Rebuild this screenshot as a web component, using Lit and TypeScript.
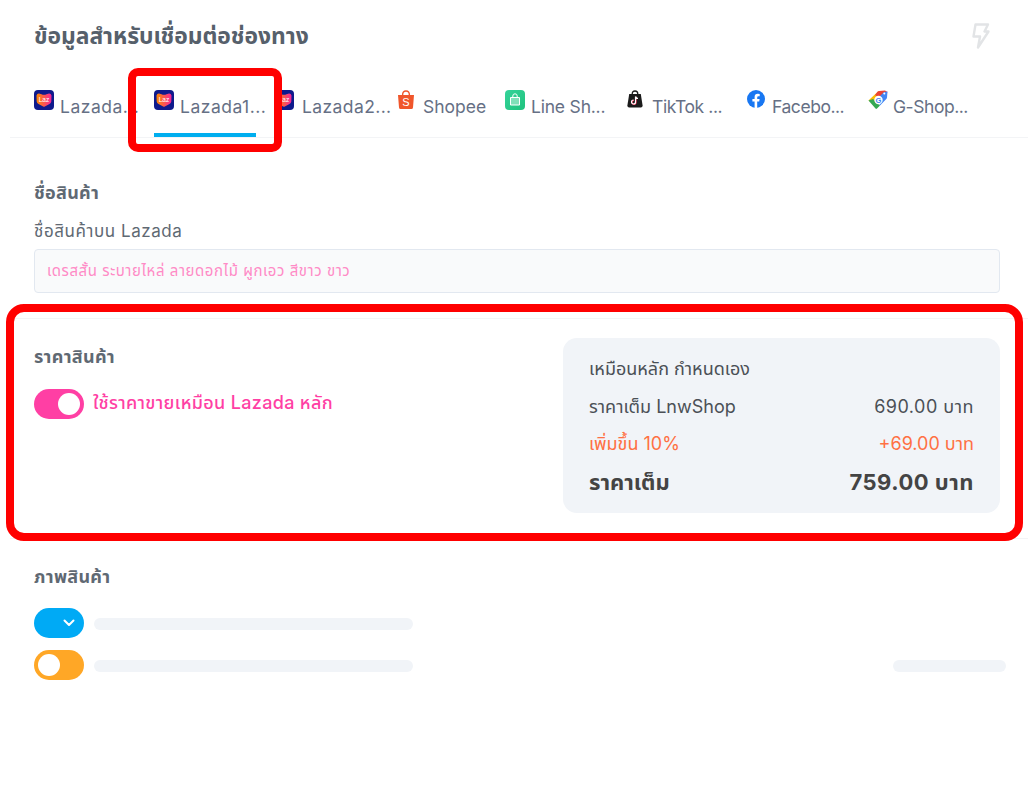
import { LitElement, html, css, svg } from "lit";
import { customElement } from "lit/decorators.js";

const laz = (id: string) => svg`<svg width="20" height="20" viewBox="0 0 20 20">
  <defs><linearGradient id="h${id}" x1="0" y1="0" x2="1" y2="0"><stop offset="0" stop-color="#ff8a00"/><stop offset="1" stop-color="#f5259b"/></linearGradient></defs>
  <rect width="20" height="20" rx="4" fill="#0f1a8c"/>
  <path d="M2.5 5.5 Q3 3.5 5 3.6 L7.5 4.2 Q10 5.4 12.5 4.2 L15 3.6 Q17 3.5 17.5 5.5 L17.3 11.5 Q17 13 15.5 14 L10.8 16.6 Q10 17 9.2 16.6 L4.5 14 Q3 13 2.7 11.5 Z" fill="url(#h${id})"/>
  <text x="10" y="11.6" text-anchor="middle" font-family="Liberation Sans" font-size="6.5" fill="#fff">Laz</text></svg>`;

const shopee = svg`<svg width="18" height="20" viewBox="0 0 18 20">
  <path d="M5.6 5 Q5.6 1 9 1 Q12.4 1 12.4 5" fill="none" stroke="#f0562b" stroke-width="1.4"/>
  <path d="M1 5 H17 L16 17.5 Q15.9 19 14.4 19 H3.6 Q2.1 19 2 17.5 Z" fill="#f0562b"/>
  <text x="9" y="15.8" text-anchor="middle" font-family="Liberation Sans" font-size="11" fill="#fff">S</text></svg>`;

const line = svg`<svg width="20" height="20" viewBox="0 0 20 20">
  <defs><linearGradient id="lg" x1="0" y1="0" x2="1" y2="1"><stop offset="0" stop-color="#35d39a"/><stop offset="1" stop-color="#1fc27d"/></linearGradient></defs>
  <rect width="20" height="20" rx="4" fill="url(#lg)"/>
  <path d="M5.5 7.5 H14.5 V15 H5.5 Z" fill="#c9f3e0" fill-opacity=".55" stroke="#fff" stroke-width="1"/>
  <path d="M7.8 7.5 V6 Q7.8 3.8 10 3.8 Q12.2 3.8 12.2 6 V7.5" fill="none" stroke="#fff" stroke-width="1"/></svg>`;

const tiktok = svg`<svg width="16" height="18" viewBox="0 0 16 18">
  <path d="M5.2 4 Q5.2 1 8 1 Q10.8 1 10.8 4" fill="none" stroke="#1b1b1b" stroke-width="1.3"/>
  <path d="M2.2 4 H13.8 L15.6 15.5 Q15.7 17.5 13.8 17.5 H2.2 Q.3 17.5 .4 15.5 Z" fill="#1b1b1b"/>
  <path d="M8.5 6.5 V12 A2 2 0 1 1 6.5 10" fill="none" stroke="#ff2d55" stroke-width="1.2" transform="translate(.5 .3)"/>
  <path d="M8.5 6.5 V12 A2 2 0 1 1 6.5 10 M8.5 6.5 Q9 8.3 11 8.5" fill="none" stroke="#fff" stroke-width="1.2"/></svg>`;

const fb = svg`<svg width="18" height="18" viewBox="0 0 18 18">
  <circle cx="9" cy="9" r="9" fill="#1877f2"/>
  <path d="M7.6 18 V11.6 H5.4 V9 H7.6 V7 Q7.6 3.8 10.8 3.8 Q12 3.8 12.7 4 V6.2 H11.5 Q10.2 6.2 10.2 7.5 V9 H12.6 L12.2 11.6 H10.2 V18 Z" fill="#fff"/></svg>`;

const gshop = svg`<svg width="20" height="20" viewBox="0 0 20 20">
  <path d="M.5 10.5 L10 1.5 H12 L5 13.5 Z" fill="#fbbc04"/>
  <path d="M.5 10.5 L7.5 18.6 Q8.3 19.3 9 18.6 L12 15.5 L5 9 Z" fill="#34a853"/>
  <path d="M9.5 1.8 Q10.2 1 11 1 L17 .5 L19.5 2 L13 9 L7 5 Z" fill="#ea4335"/>
  <path d="M19.5 1.5 L19 7.5 Q19 8.3 18.3 9 L12 15.5 L9 9 L16 2 Z" fill="#4285f4"/>
  <circle cx="10.5" cy="10" r="4.2" fill="#fff"/>
  <circle cx="16.3" cy="3.4" r="1" fill="#fff"/>
  <text x="10.5" y="12.6" text-anchor="middle" font-family="Liberation Sans" font-size="7.5" font-weight="700" fill="#4285f4">G</text></svg>`;

const tabs = [
  { icon: laz("a"), box: 20, label: "Lazada...", width: 102, ls: 0.5 },
  { icon: laz("b"), box: 20, label: "Lazada1...", width: 102, ls: 0.5, active: true },
  { icon: laz("c"), box: 22, label: "Lazada2...", width: 105, ls: 0.4 },
  { icon: shopee, box: 20, label: "Shopee", width: 90, ls: 0 },
  { icon: line, box: 20, label: "Line Sh...", width: 104, ls: -0.2 },
  { icon: tiktok, box: 19, label: "TikTok ...", width: 102, ls: -0.4 },
  { icon: fb, box: 19, label: "Facebo...", width: 103, ls: -0.45 },
  { icon: gshop, box: 19, label: "G-Shop...", width: 101, ls: -0.45 },
];

@customElement("app-root")
export class AppRoot extends LitElement {
  static styles = css`
    :host { display: block; position: relative; width: 1028px; height: 786px; overflow: hidden; background: #fff;
      font-family: "Inter", "Noto Sans", "Noto Sans Thai", sans-serif; color: #5b6570; }
    .panel { margin-left: 10px; }
    .head { display: flex; justify-content: space-between; align-items: center; padding: 18px 38px 0 24px; height: 35px; }
    h1 { margin: 0; font-size: 22.8px; line-height: 34px; font-weight: 700; color: #56606b; }
    .tabs { display: flex; gap: 18px; height: 63px; margin-top: 21px; padding-left: 24px; border-bottom: 1px solid #f3f4f6; }
    .tab { display: flex; flex: none; align-items: flex-start; gap: 6px; padding-top: 16px; height: 43px; font-size: 17.5px; line-height: 28px; color: #667085; white-space: nowrap; border-bottom: 4px solid transparent; }
    .ic { display: block; flex: none; }
    .ic svg { display: block; }
    .tab .lbl { margin-top: 3px; }
    .tab.active { border-bottom-color: #00aeef; }
    .section { padding: 0 28px 0 24px; }
    .name { padding-top: 42px; height: 138px; border-bottom: 1px solid #f3f4f6; }
    h2 { margin: 0; font-size: 18px; line-height: 26px; font-weight: 700; color: #5f6973; letter-spacing: .3px; }
    .label { margin-top: 13px; font-size: 17px; line-height: 24px; color: #5f6973; letter-spacing: .55px; }
    .input { margin-top: 6px; height: 42px; display: flex; align-items: center; padding-left: 12px; padding-top: 1px; box-sizing: content-box; height: 41px; font-size: 15px; letter-spacing: .55px; color: #ff8ac6; background: #f9fafb; border: 1px solid #e2e8f0; border-radius: 4px; }
    .price { display: flex; justify-content: space-between; padding-top: 19px; height: 200px; border-bottom: 1px solid #f3f4f6; }
    .price-left { padding-top: 6px; }
    .toggle-row { display: flex; align-items: center; gap: 9px; margin-top: 19px; }
    .pink-text { font-size: 18px; color: #ff3fa4; line-height: 30px; margin-top: -2px; letter-spacing: .33px; font-weight: 500; }
    .switch { width: 50px; height: 30px; border-radius: 15px; display: flex; align-items: center; padding: 0 4px; box-sizing: border-box; flex: none; }
    .switch i { display: block; width: 22px; height: 22px; border-radius: 50%; background: #fff; }
    .switch.pink { background: #ff3fa4; justify-content: flex-end; }
    .switch.blue { background: #00aaf5; justify-content: flex-end; padding-right: 8px; }
    .switch.orange { background: #ffa726; }
    .card { width: 437px; height: 175px; background: #f1f4f8; border-radius: 14px; padding: 16px 26px 0; box-sizing: border-box; color: #4b5056; font-size: 18px; }
    .row { display: flex; justify-content: space-between; height: 37px; line-height: 30px; }
    .row.first { height: 38px; }
    .row .wide { letter-spacing: .5px; }
    .row.total { font-size: 22px; font-weight: 700; line-height: 33px; color: #444; }
    .row.orange { color: #ff7043; }
    .images { padding-top: 25px; }
    .list { display: flex; flex-direction: column; gap: 12px; margin-top: 18px; }
    .item { display: flex; align-items: center; gap: 10px; }
    .bar { height: 12px; width: 319px; background: #f1f4f8; border-radius: 6px; margin-top: 2px; }
    .bar.right { width: 113px; margin-left: auto; margin-right: -6px; }
    .frame { position: absolute; box-sizing: border-box; border: 8px solid #ff0000; pointer-events: none; }
    .f1 { left: 128px; top: 68px; width: 154px; height: 84px; border-radius: 10px; }
    .f2 { left: 6px; top: 304px; width: 1017px; height: 237px; border-radius: 18px; }
  `;

  render() {
    return html`
      <div class="panel">
        <div class="head">
          <h1>ข้อมูลสำหรับเชื่อมต่อช่องทาง</h1>
          <svg width="18" height="26" viewBox="0 0 18 26"><path d="M3.5 1.5 H16 L12.5 8.5 H16.5 L6 24.5 L8 13.5 H1.5 Z" fill="none" stroke="#e2e4e6" stroke-width="2.4" stroke-linejoin="round"/></svg>
        </div>
        <div class="tabs">
          ${tabs.map(t => html`
            <div class="tab ${t.active ? "active" : ""}" style="width:${t.width}px">
              <span class="ic" style="width:${t.box}px">${t.icon}</span><span class="lbl" style="letter-spacing:${t.ls}px">${t.label}</span>
            </div>`)}
        </div>
        <div class="section name">
          <h2>ชื่อสินค้า</h2>
          <div class="label">ชื่อสินค้าบน Lazada</div>
          <div class="input">เดรสสั้น ระบายไหล่ ลายดอกไม้ ผูกเอว สีขาว ขาว</div>
        </div>
        <div class="section price">
          <div class="price-left">
            <h2>ราคาสินค้า</h2>
            <div class="toggle-row">
              <div class="switch pink"><i></i></div>
              <span class="pink-text">ใช้ราคาขายเหมือน Lazada หลัก</span>
            </div>
          </div>
          <div class="card">
            <div class="row first"><span>เหมือนหลัก กำหนดเอง</span></div>
            <div class="row"><span>ราคาเต็ม LnwShop</span><span class="wide">690.00 บาท</span></div>
            <div class="row orange"><span>เพิ่มขึ้น 10%</span><span>+69.00 บาท</span></div>
            <div class="row total"><span>ราคาเต็ม</span><span class="wide">759.00 บาท</span></div>
          </div>
        </div>
        <div class="section images">
          <h2>ภาพสินค้า</h2>
          <div class="list">
            <div class="item">
              <div class="switch blue"><svg width="14" height="10" viewBox="0 0 14 10"><path d="M2.5 2.5 L7 7 L11.5 2.5" fill="none" stroke="#fff" stroke-width="2" stroke-linecap="round" stroke-linejoin="round"/></svg></div>
              <div class="bar"></div>
            </div>
            <div class="item">
              <div class="switch orange"><i></i></div>
              <div class="bar"></div>
              <div class="bar right"></div>
            </div>
          </div>
        </div>
      </div>
      <div class="frame f1"></div>
      <div class="frame f2"></div>
    `;
  }
}
